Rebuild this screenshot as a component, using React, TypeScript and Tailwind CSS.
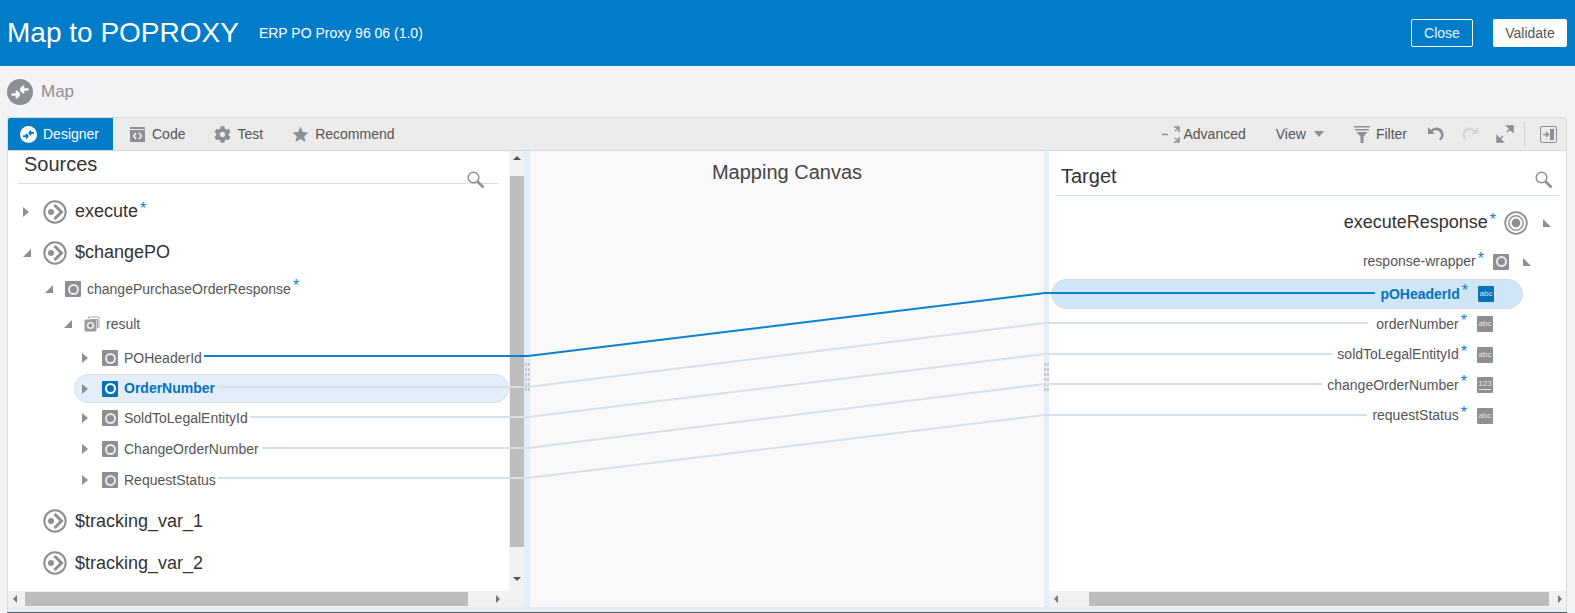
import { FaCog } from 'react-icons/fa';

const FONT = "font-['Liberation_Sans',Arial,sans-serif]";

// icons
function MapGlyph({ size, bg, fg }: { size: number; bg: string; fg: string }) {
  return (
    <svg width={size} height={size} viewBox="0 0 26 26" className="shrink-0">
      <circle cx="13" cy="13" r="13" fill={bg} />
      <path d="M13.500 10.500h8M13.500 10.500l3.500-3.500M13.500 10.500l3.500 3.500M4.500 15.500h8M12.500 15.500l-3.500-3.500M12.500 15.500l-3.500 3.500" stroke={fg} strokeWidth="2.400" fill="none" />
    </svg>
  );
}

function ExecIcon() {
  return (
    <svg width="24" height="24" viewBox="0 0 24 24" className="shrink-0">
      <circle cx="12" cy="12" r="10.700" fill="none" stroke="#8c8f93" strokeWidth="2" />
      <circle cx="8" cy="12" r="3" fill="#8c8f93" />
      <path d="M11.500 5 18.500 12l-7 7" fill="none" stroke="#8c8f93" strokeWidth="3" />
    </svg>
  );
}

function TargetIcon() {
  return (
    <svg width="24" height="24" viewBox="0 0 24 24" className="shrink-0">
      <circle cx="12" cy="12" r="10.800" fill="none" stroke="#8c8f93" strokeWidth="1.800" />
      <circle cx="12" cy="12" r="7.200" fill="none" stroke="#8c8f93" strokeWidth="1.400" />
      <circle cx="12" cy="12" r="4.400" fill="#8c8f93" />
    </svg>
  );
}

function ElementIcon({ active }: { active?: boolean }) {
  return (
    <span className={`flex h-4 w-4 shrink-0 items-center justify-center rounded-[1px] ${active ? 'bg-[#0572b8]' : 'bg-[#8c8f93]'}`}>
      <span className={`h-[11px] w-[11px] rounded-full border-2 ${active ? 'border-white bg-[#0572b8]' : 'border-[#e9e9e9] bg-[#8c8f93]'}`} />
    </span>
  );
}

function StackIcon() {
  return (
    <svg width="16" height="16" viewBox="0 0 16 16" className="shrink-0">
      <path d="M4.500 2.500V1h10.500v10.500h-1.500M6.500 3.500h7v8" fill="none" stroke="#a5a7aa" strokeWidth="1" />
      <rect x="0.500" y="3.500" width="12" height="12" rx="1" fill="#9a9c9f" />
      <circle cx="6.500" cy="9.500" r="3.600" fill="#eee" />
      <circle cx="6.500" cy="9.500" r="2" fill="#8c8f93" />
    </svg>
  );
}

function TypeIcon({ label, active }: { label: string; active?: boolean }) {
  return (
    <span className={`flex h-4 w-4 shrink-0 flex-col items-center justify-center rounded-[1px] text-[8px] leading-[8px] text-[#e2e2e2] ${active ? 'bg-[#0572b8]' : 'bg-[#8c8f93]'}`}>
      {label}
      {label === '123' && <span className="mt-[1px] h-[1px] w-3 bg-[#e2e2e2]" />}
    </span>
  );
}

function SearchGlyph({ className }: { className: string }) {
  return (
    <svg width="18" height="18" viewBox="0 0 18 18" fill="none" className={className}>
      <circle cx="6.500" cy="6.500" r="5.300" stroke="#8c8f93" strokeWidth="1.500" />
      <path d="M10.500 10.500l6 6" stroke="#8c8f93" strokeWidth="2.600" />
    </svg>
  );
}

function Grip({ className }: { className: string }) {
  const ys = [0, 5, 10, 15, 20, 25];
  return (
    <svg width="5" height="30" viewBox="0 0 5 30" className={className}>
      {ys.map((y) => (
        <g key={y} fill="#c9c9c9">
          <rect x="0" y={y} width="2" height="3" />
          <rect x="3" y={y} width="2" height="3" />
        </g>
      ))}
    </svg>
  );
}

function TriRight() {
  return <span className="h-0 w-0 shrink-0 border-y-[5px] border-l-[6px] border-y-transparent border-l-[#8c8f93]" />;
}

function TriCorner({ flip }: { flip?: boolean }) {
  return (
    <svg width="8" height="8" viewBox="0 0 8 8" className="shrink-0">
      <path d={flip ? 'M0 0l8 8H0z' : 'M8 0v8H0z'} fill="#8c8f93" />
    </svg>
  );
}

function Star_() {
  return <span className="ml-[2px] -translate-y-[3px] text-[16px] leading-none text-[#0b7fd0]">*</span>;
}

function SourceRow({ pad, name, big, asterisk, icon, tri, active, h }: { pad: number; name: string; big?: boolean; asterisk?: boolean; icon: React.ReactNode; tri?: 'r' | 'd' | null; active?: boolean; h: number }) {
  return (
    <div className="flex items-center" style={{ height: h, paddingLeft: pad }}>
      <span className="flex w-[20px] shrink-0 items-center">
        {tri === 'r' && <TriRight />}
        {tri === 'd' && <TriCorner />}
      </span>
      {icon}
      <span className={big ? 'ml-2 text-[18px] text-[#333]' : active ? 'ml-[6px] text-[14px] font-bold text-[#0572b8]' : 'ml-[6px] text-[14px] text-[#555]'}>{name}</span>
      {asterisk && <Star_ />}
    </div>
  );
}

function TargetRow({ name, icon }: { name: string; icon: React.ReactNode }) {
  return (
    <div className="flex h-[30.5px] items-center justify-end pr-[73px]">
      <span className="text-[14px] text-[#555]">{name}</span>
      <Star_ />
      <span className="ml-[10px]">{icon}</span>
    </div>
  );
}

function ScrollX({ left, width, gap }: { left: number; width: number; gap: number }) {
  return (
    <div className="flex h-[16px] items-center bg-[#f1f1f1] pr-[1px]">
      <span className="ml-[5px] h-0 w-0 border-y-[4px] border-r-[4px] border-y-transparent border-r-[#777]" />
      <div className="h-[14px] bg-[#bdbdbd]" style={{ marginLeft: left, width }} />
      <span className="h-0 w-0 border-y-[4px] border-l-[4px] border-y-transparent border-l-[#777]" style={{ marginLeft: gap }} />
    </div>
  );
}

export default function App() {
  return (
    <div className={`h-[613px] w-[1575px] overflow-hidden bg-[#f2f3f5] ${FONT}`}>
      {/* Page header */}
      <div className="flex h-[66px] items-center bg-[#007cc8] pl-[7px] pr-[8px] text-white">
        <h1 className="text-[28px] leading-none">Map to POPROXY</h1>
        <span className="ml-[20px] text-[14px]">ERP PO Proxy 96 06 (1.0)</span>
        <div className="ml-auto flex gap-5">
          <button className="h-[28px] w-[62px] rounded-[2px] border border-white text-[14px] text-[#e8f3fb]">Close</button>
          <button className="h-[28px] w-[74px] rounded-[2px] bg-white text-[14px] text-[#555]">Validate</button>
        </div>
      </div>

      {/* Map title */}
      <div className="flex h-[51px] items-center pl-[7px]">
        <MapGlyph size={26} bg="#8c8f93" fg="#fff" />
        <span className="ml-2 text-[17px] text-[#8c8f93]">Map</span>
      </div>

      {/* Panel */}
      <div className="ml-[7px] w-[1560px] rounded-t-[3px] border border-b-0 border-[#d9d9d9]">
        <div className="flex h-[33px] items-center border-b border-[#d6d6d6] bg-[#ebebeb] text-[14px] text-[#555]">
          <div className="flex h-[32px] w-[105px] items-center gap-[6px] rounded-tl-[2px] bg-[#007cc8] pl-[12px] text-white">
            <MapGlyph size={17} bg="#fff" fg="#007cc8" />
            Designer
          </div>
          <div className="ml-[16px] flex items-center gap-[6px]">
            <svg width="17" height="17" viewBox="0 0 17 17">
              <path d="M1 1h15v2H1z" fill="#8c8f93" />
              <rect x="1" y="4" width="15" height="12" fill="#8c8f93" />
              <path d="M7 7l-2.500 3L7 13M10 7l2.500 3L10 13" stroke="#fff" strokeWidth="1.300" fill="none" />
            </svg>
            Code
          </div>
          <div className="ml-[29px] flex items-center gap-[6px]">
            <FaCog size={17} className="text-[#8c8f93]" />
            Test
          </div>
          <div className="ml-[29px] flex items-center gap-[6px]">
            <svg width="17" height="17" viewBox="0 0 17 17">
              <polygon points="8.500,0.500 10.800,6 16.500,6.500 12.200,10.300 13.500,16 8.500,13 3.500,16 4.800,10.300 0.500,6.500 6.200,6" fill="#8c8f93" />
            </svg>
            Recommend
          </div>
          <div className="ml-auto flex items-center">
            <svg width="18" height="17" viewBox="0 0 18 17">
              <path d="M0 8.500h6M12 1h5v5M17 1l-4 4M12 16h5v-5M17 16l-4-4" stroke="#8c8f93" strokeWidth="1.500" fill="none" />
            </svg>
            <span className="ml-1">Advanced</span>
            <span className="ml-[30px]">View</span>
            <span className="ml-[8px] h-0 w-0 border-x-[5px] border-t-[6px] border-x-transparent border-t-[#8c8f93]" />
            <svg width="16" height="17" viewBox="0 0 16 17" className="ml-[30px]">
              <path d="M0 0h16v1.500H0zM1 3h14v1.500H1zM2.500 6h11L9.500 10.500V17h-3v-6.500z" fill="#8c8f93" />
            </svg>
            <span className="ml-[6px]">Filter</span>
            <svg width="18" height="18" viewBox="0 0 18 18" className="ml-[20px]">
              <path d="M1 2v7h7L5.500 6.500C8 4.500 12 5 13.500 8c1 2 .5 4.500-1.500 6l1.500 1.500C17 13 17.500 8.500 15 5 12.500 2 8 1.500 4 5z" fill="#8c8f93" />
            </svg>
            <svg width="18" height="18" viewBox="0 0 18 18" className="ml-[16px] -scale-x-100">
              <path d="M1 2v7h7L5.500 6.500C8 4.500 12 5 13.500 8c1 2 .5 4.500-1.500 6l1.500 1.500C17 13 17.500 8.500 15 5 12.500 2 8 1.500 4 5z" fill="#d6d6d6" />
            </svg>
            <svg width="18" height="18" viewBox="0 0 18 18" className="ml-[17px]">
              <path d="M11 1h6v6zM1 17v-6l6 6zM14 4l-3 3M4 14l3-3" fill="#8c8f93" stroke="#8c8f93" strokeWidth="1.500" />
            </svg>
            <span className="ml-[10px] mr-[15px] h-[26px] w-px bg-[#d0d0d0]" />
            <svg width="17" height="17" viewBox="0 0 17 17" className="mr-[9px]">
              <rect x="0.500" y="0.500" width="16" height="16" rx="1.500" fill="none" stroke="#8c8f93" />
              <path d="M3 8.500h5M6 6l2.500 2.500L6 11" stroke="#8c8f93" strokeWidth="1.300" fill="none" />
              <rect x="10" y="3" width="4" height="11" fill="#8c8f93" />
            </svg>
          </div>
        </div>

        <div className="relative flex h-[456px] bg-white">
          {/* Sources */}
          <div className="flex w-[516px] shrink-0">
            <div className="flex w-[501px] flex-col">
              <div className="mx-[10px] flex h-[33px] items-start border-b border-[#d6e0e8] pl-[6px]">
                <span className="text-[20px] leading-[26px] text-[#333]">Sources</span>
              </div>
              <div className="flex-1 pt-[6px]">
                <SourceRow h={43} pad={15} big asterisk name="execute" tri="r" icon={<ExecIcon />} />
                <SourceRow h={39} pad={15} big name="$changePO" tri="d" icon={<ExecIcon />} />
                <SourceRow h={34} pad={37} asterisk name="changePurchaseOrderResponse" tri="d" icon={<ElementIcon />} />
                <SourceRow h={36} pad={56} name="result" tri="d" icon={<StackIcon />} />
                <SourceRow h={32} pad={74} name="POHeaderId" tri="r" icon={<ElementIcon />} />
                <div className="ml-[66px] flex h-[29px] w-[435px] items-center rounded-[15px] border border-[#d9dde0] bg-[#e3eefa]">
                  <SourceRow h={27} pad={7} active name="OrderNumber" tri="r" icon={<ElementIcon active />} />
                </div>
                <SourceRow h={30} pad={74} name="SoldToLegalEntityId" tri="r" icon={<ElementIcon />} />
                <SourceRow h={32} pad={74} name="ChangeOrderNumber" tri="r" icon={<ElementIcon />} />
                <SourceRow h={30} pad={74} name="RequestStatus" tri="r" icon={<ElementIcon />} />
                <SourceRow h={52} pad={15} big name="$tracking_var_1" icon={<ExecIcon />} />
                <SourceRow h={32} pad={15} big name="$tracking_var_2" icon={<ExecIcon />} />
              </div>
              <ScrollX left={8} width={443} gap={28} />
            </div>
            {/* Vertical scrollbar */}
            <div className="flex w-[15px] flex-col items-center bg-[#f1f1f1]">
              <span className="mt-[5px] h-0 w-0 border-x-[4px] border-b-[4px] border-x-transparent border-b-[#555]" />
              <div className="mt-[16px] h-[371px] w-[14px] bg-[#bdbdbd]" />
              <span className="mt-[30px] h-0 w-0 border-x-[4px] border-t-[4px] border-x-transparent border-t-[#555]" />
            </div>
          </div>

          {/* Splitter */}
          <div className="relative w-[6px] shrink-0 bg-[#e3eefa]" />

          {/* Canvas */}
          <div className="flex w-[514px] shrink-0 justify-center bg-[#f9f9f9] pt-[8px]">
            <span className="text-[20px] leading-[26px] text-[#444]">Mapping Canvas</span>
          </div>

          <div className="w-[5px] shrink-0 bg-[#e3eefa]" />

          {/* Target */}
          <div className="flex min-w-0 flex-1 flex-col">
            <div className="mx-[6px] flex h-[45px] items-end border-b border-[#d6e0e8] pb-[6px] pl-[6px]">
              <span className="text-[20px] leading-[26px] text-[#333]">Target</span>
            </div>
            <div className="flex-1">
              <div className="flex h-[52px] items-center justify-end pr-[15px] pt-[1px]">
                <span className="text-[18px] text-[#333]">executeResponse</span>
                <Star_ />
                <span className="ml-[8px]"><TargetIcon /></span>
                <span className="ml-[15px]"><TriCorner flip /></span>
              </div>
              <div className="flex h-[27px] items-center justify-end pr-[35px]">
                <span className="text-[14px] text-[#555]">response-wrapper</span>
                <Star_ />
                <span className="ml-[9px]"><ElementIcon /></span>
                <span className="ml-[14px]"><TriCorner flip /></span>
              </div>
              <div className="mx-[2px] mt-[4px] flex h-[30px] w-[472px] items-center justify-end rounded-[15px] border border-[#d9dde0] bg-[#cfe6f9] pr-[28px]">
                <span className="text-[14px] font-bold text-[#0572b8]">pOHeaderId</span>
                <Star_ />
                <span className="ml-[10px]"><TypeIcon label="abc" active /></span>
              </div>
              <TargetRow name="orderNumber" icon={<TypeIcon label="abc" />} />
              <TargetRow name="soldToLegalEntityId" icon={<TypeIcon label="abc" />} />
              <TargetRow name="changeOrderNumber" icon={<TypeIcon label="123" />} />
              <TargetRow name="requestStatus" icon={<TypeIcon label="abc" />} />
            </div>
            <ScrollX left={31} width={460} gap={9} />
          </div>

          {/* Search icons and grips lie over the panes */}
          <SearchGlyph className="absolute left-[459px] top-[20px]" />
          <SearchGlyph className="absolute right-[13px] top-[20px]" />
          <Grip className="absolute left-[517px] top-[212px]" />
          <Grip className="absolute left-[1036px] top-[212px]" />

          {/* Mapping lines */}
          <svg className="pointer-events-none absolute left-0 top-0" width="1558" height="456" viewBox="8 151 1558 456" fill="none">
            <g stroke="#d6e0ea" strokeWidth="2">
              <path d="M218 387H528L1045 323H1368" />
              <path d="M250 417H528L1045 354H1332" />
              <path d="M262 448H528L1045 384H1322" />
              <path d="M218 478H528L1045 415H1367" />
            </g>
            <path d="M204 356H528L1045 293H1375" stroke="#0b7fd0" strokeWidth="2" />
          </svg>
        </div>
        <div className="h-[5px] bg-[#e3eefa]" />
      </div>
      <div className="ml-[7px] h-px w-[1560px] bg-[#555]" />
    </div>
  );
}
